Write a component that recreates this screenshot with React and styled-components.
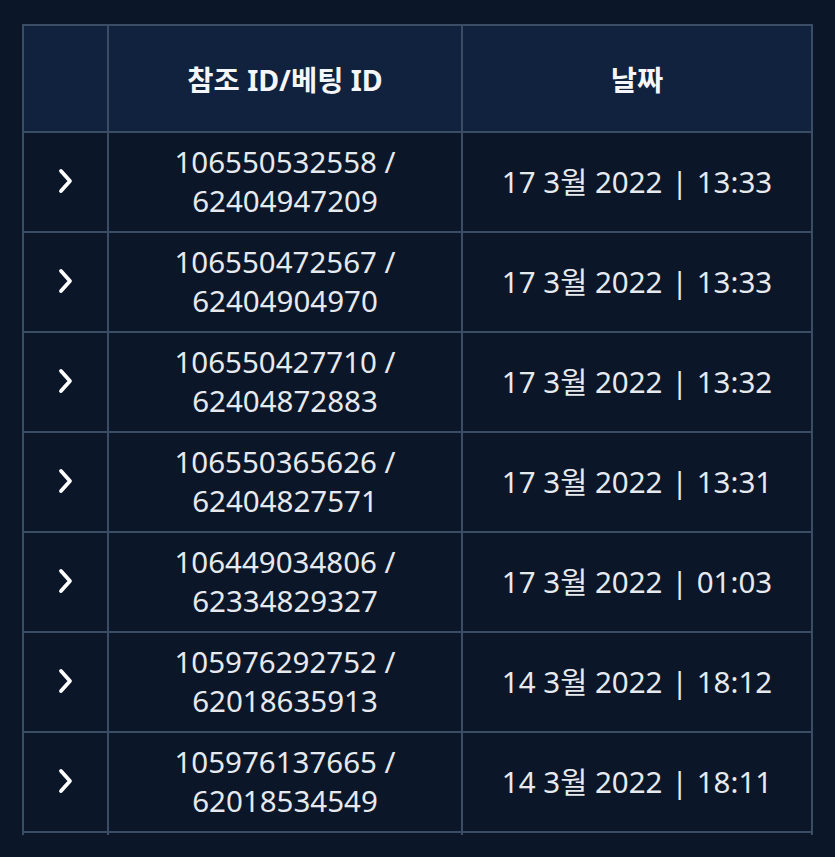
import React from 'react';
import styled, { createGlobalStyle } from 'styled-components';

const GlobalStyle = createGlobalStyle`
  html, body {
    margin: 0;
    padding: 0;
    background: #0b1628;
  }
  body {
    font-family: "Noto Sans", "Noto Sans CJK KR", sans-serif;
    color: #e9edf2;
  }
`;

const rows = [
  { ref: '106550532558', bet: '62404947209', date: '17 3월 2022', time: '13:33' },
  { ref: '106550472567', bet: '62404904970', date: '17 3월 2022', time: '13:33' },
  { ref: '106550427710', bet: '62404872883', date: '17 3월 2022', time: '13:32' },
  { ref: '106550365626', bet: '62404827571', date: '17 3월 2022', time: '13:31' },
  { ref: '106449034806', bet: '62334829327', date: '17 3월 2022', time: '01:03' },
  { ref: '105976292752', bet: '62018635913', date: '14 3월 2022', time: '18:12' },
  { ref: '105976137665', bet: '62018534549', date: '14 3월 2022', time: '18:11' },
];

export default function App() {
  return (
    <Page>
      <GlobalStyle />
      <Frame>
        <Table>
          <thead>
            <HeadRow>
              <HeadCell width="83px" />
              <HeadCell width="352px">참조 ID/베팅 ID</HeadCell>
              <HeadCell>날짜</HeadCell>
            </HeadRow>
          </thead>
          <tbody>
            {rows.map((r, i) => (
              <Row key={i}>
                <Cell>
                  <Chevron viewBox="0 0 20 28">
                    <path d="M5 4 L14 14 L5 24" />
                  </Chevron>
                </Cell>
                <Cell>
                  {r.ref} /<br />
                  {r.bet}
                </Cell>
                <Cell>
                  {r.date}
                  <Sep>|</Sep>
                  {r.time}
                </Cell>
              </Row>
            ))}
            <StubRow>
              <Cell />
              <Cell />
              <Cell />
            </StubRow>
          </tbody>
        </Table>
      </Frame>
    </Page>
  );
}

const Page = styled.div`
  width: 835px;
  height: 857px;
  padding: 24px 0 0 22px;
  box-sizing: border-box;
`;

const Frame = styled.div`
  width: 791px;
  height: 811px;
  overflow: hidden;
`;

const Table = styled.table`
  width: 791px;
  border-collapse: collapse;
  table-layout: fixed;
  border: 2px solid #3b4d64;
`;

const HeadRow = styled.tr`
  height: 107px;
  background: #10223d;
`;

const HeadCell = styled.th`
  width: ${(props) => props.width || 'auto'};
  border: 2px solid #3b4d64;
  font-size: 28.5px;
  font-weight: 700;
  color: #f4f6f9;
  text-align: center;
  vertical-align: middle;
  padding: 0;
`;

const Row = styled.tr`
  height: 100px;
  background: #0b1628;
`;

const StubRow = styled.tr`
  height: 12px;
  background: #0b1628;
`;

const Cell = styled.td`
  border: 2px solid #3b4d64;
  font-size: 29.5px;
  line-height: 39px;
  text-align: center;
  vertical-align: middle;
  padding: 0 0 2px;
  color: #e6eaef;
`;

const Sep = styled.span`
  margin: 0 9px;
`;

const Chevron = styled.svg`
  width: 20px;
  height: 28px;
  display: block;
  margin: 0 auto;
  fill: none;
  stroke: #ffffff;
  stroke-width: 3.8;
  stroke-linecap: round;
  stroke-linejoin: round;
`;
